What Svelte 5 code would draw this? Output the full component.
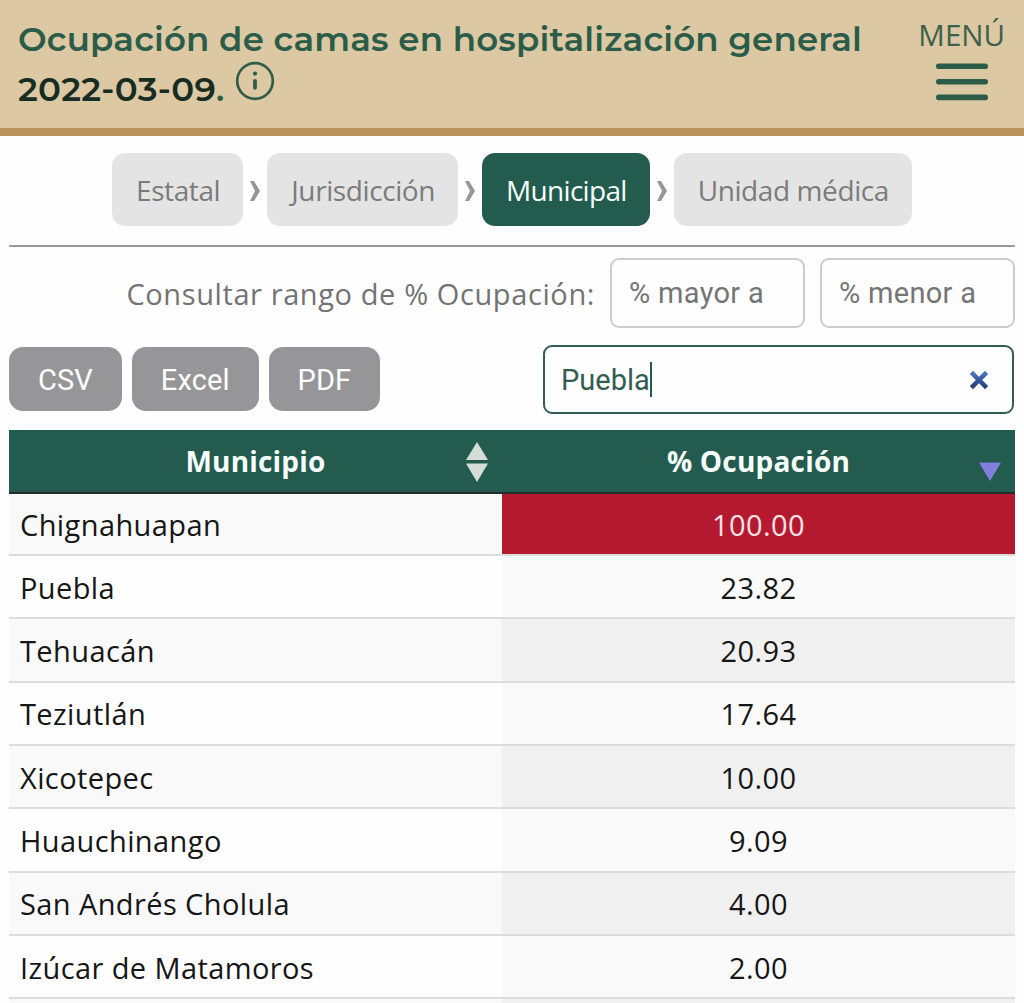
<script lang="ts">
  const levels = ['Estatal', 'Jurisdicción', 'Municipal', 'Unidad médica'];
  const exportTypes = ['CSV', 'Excel', 'PDF'];
  const rows = [
    { name: 'Chignahuapan', value: 100 },
    { name: 'Puebla', value: 23.82 },
    { name: 'Tehuacán', value: 20.93 },
    { name: 'Teziutlán', value: 17.64 },
    { name: 'Xicotepec', value: 10 },
    { name: 'Huauchinango', value: 9.09 },
    { name: 'San Andrés Cholula', value: 4 },
    { name: 'Izúcar de Matamoros', value: 2 },
  ];

  let activeLevel = $state('Municipal');
  let search = $state('Puebla');
</script>

<div class="page">
  <header>
    <h1>
      <span class="title">Ocupación de camas en hospitalización general</span>
      <span class="date-line">
        <span class="date">2022-03-09</span><span>.</span>
        <svg class="info" viewBox="0 0 40 40" width="40" height="40">
          <circle cx="20" cy="20" r="17.8" fill="none" stroke="#2f5d48" stroke-width="2.7" />
          <circle cx="20" cy="12.6" r="2.1" fill="#2f5d48" />
          <path d="M20 20V26.8" stroke="#2f5d48" stroke-width="3.8" stroke-linecap="round" />
        </svg>
      </span>
    </h1>
    <button class="menu">
      <span>MENÚ</span>
      <svg viewBox="0 0 52 38" width="52" height="38">
        <path d="M2.8 3.2H49.2M2.8 18.8H49.2M2.8 34.4H49.2" stroke="#2b5c49" stroke-width="5.6" stroke-linecap="round" />
      </svg>
    </button>
  </header>

  <main>
    <nav>
      {#each levels as level, i}
        {#if i > 0}
          <svg class="chevron" viewBox="0 0 10 20" width="10" height="20">
            <path d="M0 0H4L10 10L4 20H0L5 10Z" fill="#969696" />
          </svg>
        {/if}
        <button class="level" class:active={level === activeLevel} onclick={() => (activeLevel = level)}>{level}</button>
      {/each}
    </nav>

    <div class="range">
      <span class="range-label">Consultar rango de % Ocupación:</span>
      <input type="text" placeholder="% mayor a" />
      <input type="text" placeholder="% menor a" />
    </div>

    <div class="tools">
      {#each exportTypes as type}
        <button class="export">{type}</button>
      {/each}
      <div class="search">
        <span class="search-text">{search}</span>
        <span class="caret"></span>
        <button class="clear" aria-label="Borrar" onclick={() => (search = '')}>
          <svg viewBox="0 0 20 20" width="20" height="20">
            <defs>
              <linearGradient id="clear-fill" gradientUnits="userSpaceOnUse" x1="0" y1="0" x2="0" y2="20">
                <stop offset="0.1" stop-color="#4a78c0" />
                <stop offset="0.5" stop-color="#34589f" />
                <stop offset="0.9" stop-color="#2a3c72" />
              </linearGradient>
            </defs>
            <path d="M2.4 2.4L17.6 17.6M17.6 2.4L2.4 17.6" stroke="url(#clear-fill)" stroke-width="4.4" />
          </svg>
        </button>
      </div>
    </div>

    <div class="table" role="table">
      <div class="row head" role="row">
        <div class="cell" role="columnheader">
          <span>Municipio</span>
          <svg class="sort" viewBox="0 0 22 40" width="22" height="40">
            <path d="M11 0L22 18H0Z M0 21.5H22L11 40Z" fill="#d5ddd9" />
          </svg>
        </div>
        <div class="cell" role="columnheader">
          <span>% Ocupación</span>
          <svg class="sort" viewBox="0 0 22 40" width="22" height="40">
            <path d="M0 20.5H22L11 39Z" fill="#7f80dc" />
          </svg>
        </div>
      </div>
      {#each rows as row}
        <div class="row" role="row">
          <div class="cell name" role="cell">{row.name}</div>
          <div class="cell value" class:full={row.value >= 100} role="cell">{row.value.toFixed(2)}</div>
        </div>
      {/each}
      <div class="row"><div class="cell name"></div><div class="cell value"></div></div>
    </div>
  </main>
</div>

<style>
  .page {
    height: 1003px;
    overflow: hidden;
    background: #fefefe;
    font-family: 'Open Sans', 'Noto Sans', sans-serif;
    font-size: 28px;
  }

  .page * {
    box-sizing: border-box;
  }

  button {
    font-family: inherit;
    font-size: inherit;
    border: none;
    padding: 0;
    cursor: pointer;
  }

  header {
    display: flex;
    justify-content: space-between;
    height: 136px;
    padding: 14px 19px 0 18px;
    background: #dcc8a2;
    border-bottom: 8px solid #ba945f;
  }

  h1 {
    display: flex;
    flex-direction: column;
    margin: 0;
    font-family: Montserrat, Inter, sans-serif;
    font-size: 34px;
    font-weight: 600;
    line-height: 50px;
    color: #2b5c49;
    white-space: nowrap;
  }

  .title {
    letter-spacing: 0.18px;
  }

  .date-line {
    display: flex;
  }

  .date {
    color: #182d22;
    letter-spacing: 0.3px;
  }

  .info {
    margin: -3px 0 0 11px;
  }

  .menu {
    display: flex;
    flex-direction: column;
    align-items: center;
    height: 90px;
    background: none;
    color: #3c604b;
    font-size: 29.5px;
    line-height: 42px;
  }

  .menu svg {
    margin-top: 7px;
  }

  main {
    padding: 0 9px;
  }

  nav {
    display: flex;
    align-items: center;
    justify-content: center;
    height: 111px;
    padding-bottom: 2px;
    border-bottom: 2px solid #999;
  }

  .level {
    height: 73px;
    padding: 1px 23px 0 24px;
    border-radius: 13px;
    background: #e4e4e4;
    color: #7b7b7b;
    letter-spacing: -0.4px;
  }

  .level.active {
    background: #235b4e;
    color: #f4fffb;
    letter-spacing: -0.7px;
  }

  .chevron {
    margin: 2px 7px 0;
  }

  .range {
    display: flex;
    align-items: center;
    justify-content: flex-end;
    gap: 15px;
    margin-top: 11px;
    color: #737373;
  }

  .range-label {
    font-size: 29px;
    letter-spacing: 0.6px;
    padding-top: 1px;
  }

  input {
    width: 195px;
    height: 70px;
    padding: 0 17px;
    border: 2px solid #ccc;
    border-radius: 9px;
    background: #fefefe;
    font-family: Roboto, sans-serif;
    font-size: 29px;
    letter-spacing: 0.3px;
  }

  input::placeholder {
    color: #757575;
  }

  .tools {
    display: flex;
    align-items: center;
    gap: 10px;
    height: 69px;
    margin-top: 17px;
    font-family: Roboto, sans-serif;
    font-size: 29px;
  }

  .export {
    height: 64px;
    margin-bottom: 1px;
    padding: 1px 29px 0;
    border-radius: 14px;
    background: #969698;
    color: #fff;
    letter-spacing: 0.1px;
  }

  .search {
    display: flex;
    align-items: center;
    width: 471px;
    height: 69px;
    margin-left: auto;
    margin-right: 1px;
    padding: 0 23px 0 16px;
    border: 2px solid #335c52;
    border-radius: 9px;
    color: #335c52;
  }

  .caret {
    width: 2px;
    height: 35px;
    background: #235b4e;
  }

  .clear {
    display: flex;
    margin-left: auto;
    background: none;
  }

  .table {
    margin-top: 16px;
  }

  .row {
    display: grid;
    grid-template-columns: 493px 1fr;
    height: 63.3px;
    border-bottom: 2px solid #dcdcdc;
  }

  .head {
    height: 63.6px;
    background: #235b4e;
    border-bottom: 2px solid #202f2b;
    color: #f6fffc;
    font-weight: 700;
    letter-spacing: 0.2px;
  }

  .head + .row {
    height: 62.6px;
  }

  .cell {
    display: flex;
    align-items: center;
    color: #161616;
  }

  .head .cell {
    position: relative;
    justify-content: center;
    color: inherit;
  }

  .sort {
    position: absolute;
    right: 14px;
    top: 12px;
  }

  .name,
  .value {
    padding-top: 1px;
    font-size: 29px;
    letter-spacing: 0.4px;
  }

  .name {
    padding-left: 11px;
  }

  .value {
    justify-content: center;
    background: #fafafa;
  }

  .row:nth-child(even) .name {
    background: #f9f9f9;
  }

  .row:nth-child(even) .value {
    background: #f0f0f0;
  }

  .row .value.full,
  .row:nth-child(even) .value.full {
    background: #b5192f;
    color: #fbe3e7;
  }
</style>
